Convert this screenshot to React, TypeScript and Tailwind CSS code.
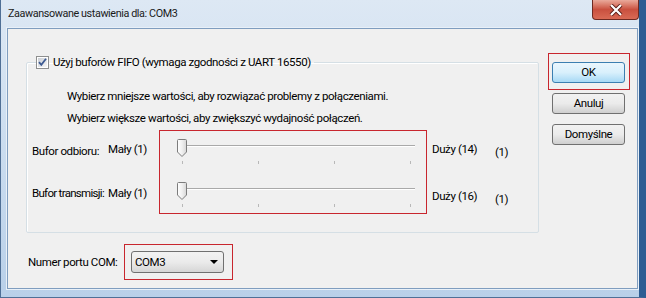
import React from "react";

const ticks = [22, 98, 174, 250];

function Slider({ id }: { id: string }) {
  return (
    <svg width="264" height="30" viewBox="0 0 264 30" className="block">
      <defs>
        <linearGradient id={id} x1="0" y1="0" x2="1" y2="0">
          <stop offset="0" stopColor="#ffffff" />
          <stop offset="0.5" stopColor="#f0f0f0" />
          <stop offset="1" stopColor="#d6d6d6" />
        </linearGradient>
      </defs>
      <line x1="21" y1="7.5" x2="255" y2="7.5" stroke="#a9a9a9" />
      <line x1="21" y1="8.5" x2="255" y2="8.5" stroke="#ffffff" />
      {ticks.map((x) => (
        <line
          key={x}
          x1={x + 0.5}
          y1="23"
          x2={x + 0.5}
          y2="26"
          stroke="#b8b8b8"
        />
      ))}
      <path
        d="M17.5 2.5 Q17.5 1.5 18.5 1.5 H25.5 Q26.5 1.5 26.5 2.5 V14 L22 18.5 L17.5 14 Z"
        fill={`url(#${id})`}
        stroke="#7c7c7c"
      />
    </svg>
  );
}

function Checkbox() {
  return (
    <svg width="13" height="13" viewBox="0 0 13 13" className="block">
      <defs>
        <linearGradient id="cb" x1="0" y1="0" x2="1" y2="1">
          <stop offset="0" stopColor="#cbcfd5" />
          <stop offset="1" stopColor="#f6f6f6" />
        </linearGradient>
      </defs>
      <rect x="0.5" y="0.5" width="12" height="12" fill="#ffffff" stroke="#8e8f8f" />
      <rect x="2" y="2" width="9" height="9" fill="url(#cb)" />
      <path
        d="M3 6.2 L5.3 8.8 L10 2.8"
        fill="none"
        stroke="#3d5a92"
        strokeWidth="1.8"
      />
    </svg>
  );
}

function WinButton({
  children,
  primary,
}: {
  children: React.ReactNode;
  primary?: boolean;
}) {
  return (
    <div
      className={
        primary
          ? "flex h-[21px] w-[73px] items-center justify-center rounded-[3px] border border-[#3c7fb1] bg-gradient-to-b from-[#eaf6fd] via-[#d9f0fc] to-[#a7d9f5] text-black"
          : "flex h-[21px] w-[73px] items-center justify-center rounded-[3px] border border-[#707070] bg-gradient-to-b from-[#f2f2f2] via-[#ebebeb] to-[#cfcfcf] text-black"
      }
    >
      {children}
    </div>
  );
}

export default function App() {
  return (
    <div className="relative flex h-[298px] w-[646px] flex-col overflow-hidden whitespace-nowrap border-b border-l border-r-[7px] border-[#4f6f96] border-r-[#2d5d93] bg-gradient-to-b from-[#dde8f4] via-[#cadcef] to-[#b9d0e9] font-['Roboto',Arial,sans-serif] text-[11.5px] leading-[15px] tracking-[-0.4px] text-black">
      <div className="flex h-[28px] items-center pb-[1px] pl-[7px] text-[10.8px] tracking-[-0.4px] text-[#1a1a1a]">
        Zaawansowane ustawienia dla: COM3
      </div>

      <div className="absolute right-0 top-0 flex h-[20px] w-[47px] items-center justify-center rounded-b-[4px] border border-t-0 border-[#6e2a22] bg-gradient-to-b from-[#e9a99b] via-[#c9503f] to-[#d96a55]">
        <svg width="14" height="12" viewBox="0 0 14 12">
          <path
            d="M2 1 L12 11 M12 1 L2 11"
            stroke="#5a1e18"
            strokeWidth="4"
          />
          <path
            d="M2 1 L12 11 M12 1 L2 11"
            stroke="#ffffff"
            strokeWidth="2.2"
          />
        </svg>
      </div>

      <div className="mb-[8px] mr-[1px] ml-[6px] flex flex-1 border border-[#7f9dbf] bg-[#f0f0f0] shadow-[0_0_0_1px_#e8f0f8]">
        <div className="ml-[18px] flex flex-col">
          <fieldset className="mt-[26px] h-[178px] w-[513px] rounded-[2px] border border-[#d5dfe5] shadow-[inset_1px_1px_0_#ffffff]">
            <legend className="ml-[9px] flex h-[14px] items-center gap-[4px] pr-[3px]">
              <Checkbox />
              <span>Użyj buforów FIFO (wymaga zgodności z UART 16550)</span>
            </legend>

            <div className="mt-[20px] pl-[40px]">
              Wybierz mniejsze wartości, aby rozwiązać problemy z połączeniami.
            </div>
            <div className="mt-[7px] pl-[40px]">
              Wybierz większe wartości, aby zwiększyć wydajność połączeń.
            </div>

            <div className="mt-[4px] flex">
              <div className="w-[132px] pt-[14px]">
                <div className="grid grid-cols-[76px_1fr] pl-[5px]">
                  <span>Bufor odbioru:</span>
                  <span className="-mt-[2px]">Mały (1)</span>
                </div>
                <div className="mt-[27px] grid grid-cols-[76px_1fr] pl-[5px]">
                  <span className="tracking-[-0.7px]">Bufor transmisji:</span>
                  <span>Mały (1)</span>
                </div>
              </div>

              <div className="flex h-[84px] w-[268px] flex-col border border-[#c8262e] pt-[7px]">
                <Slider id="s1" />
                <div className="mt-[13px]">
                  <Slider id="s2" />
                </div>
              </div>

              <div className="ml-[5px] pt-[12px]">
                <div className="flex">
                  <span className="w-[63px]">Duży (14)</span>
                  <span className="mt-[3px]">(1)</span>
                </div>
                <div className="mt-[29px] flex">
                  <span className="w-[63px]">Duży (16)</span>
                  <span className="mt-[3px]">(1)</span>
                </div>
              </div>
            </div>
          </fieldset>

          <div className="mt-[11px] flex items-center">
            <span className="ml-[2px] w-[96px]">Numer portu COM:</span>
            <div className="border border-[#c8262e] pb-[6px] pl-[6px] pr-[8px] pt-[6px]">
              <div className="flex h-[22px] w-[93px] items-center justify-between rounded-[3px] border border-[#707070] bg-gradient-to-b from-[#f2f2f2] via-[#ebebeb] to-[#d6d6d6] pl-[3px] pr-[5px]">
                <span>COM3</span>
                <svg width="8" height="4" viewBox="0 0 8 4">
                  <path d="M0 0 H8 L4 4 Z" fill="#000000" />
                </svg>
              </div>
            </div>
          </div>
        </div>

        <div className="ml-[9px] mt-[24px] flex flex-col items-start">
          <div className="border border-[#c8262e] pb-[6px] pl-[3px] pr-[4px] pt-[8px]">
            <WinButton primary>OK</WinButton>
          </div>
          <div className="ml-[4px] mt-[3px]">
            <WinButton>Anuluj</WinButton>
          </div>
          <div className="ml-[4px] mt-[10px]">
            <WinButton>Domyślne</WinButton>
          </div>
        </div>
      </div>
    </div>
  );
}
